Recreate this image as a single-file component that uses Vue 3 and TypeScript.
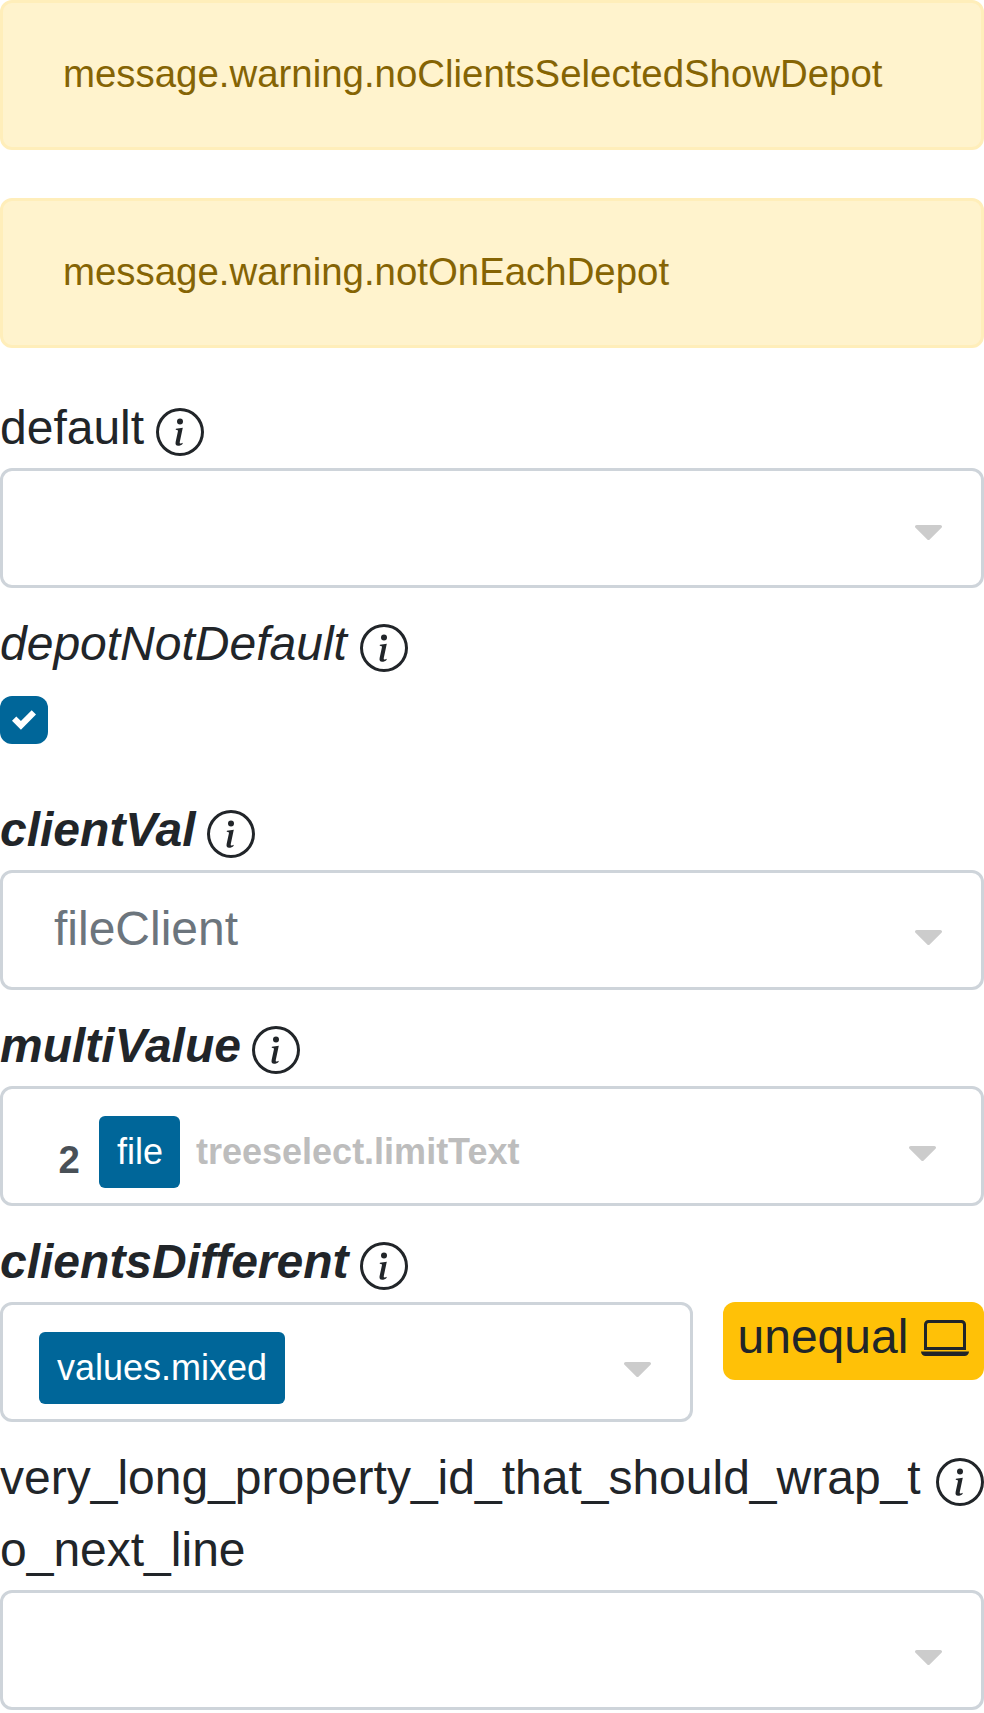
<script setup lang="ts">
interface Field {
  id: string
  kind: 'select' | 'checkbox'
  look?: string
  placeholder?: string
  count?: number
  tag?: string
  limit?: string
  badge?: string
  arrow?: string
}

const alerts: string[] = [
  'message.warning.noClientsSelectedShowDepot',
  'message.warning.notOnEachDepot',
]

const fields: Field[] = [
  { id: 'default', kind: 'select', arrow: 'raised' },
  { id: 'depotNotDefault', kind: 'checkbox', look: 'italic' },
  { id: 'clientVal', kind: 'select', look: 'strong', placeholder: 'fileClient' },
  { id: 'multiValue', kind: 'select', look: 'strong', count: 2, tag: 'file', limit: 'treeselect.limitText', arrow: 'inset' },
  { id: 'clientsDifferent', kind: 'select', look: 'strong', tag: 'values.mixed', badge: 'unequal' },
  { id: 'very_long_property_id_that_should_wrap_to_next_line', kind: 'select' },
]
</script>

<template>
  <main class="page">
    <div v-for="text in alerts" :key="text" class="alert">{{ text }}</div>
    <section v-for="field in fields" :key="field.id" class="field">
      <div class="label">
        <span class="name" :class="field.look">{{ field.id }}</span>
        <svg class="info" viewBox="0 0 16 16" fill="currentColor">
          <path fill-rule="evenodd" d="M8 15A7 7 0 1 0 8 1a7 7 0 0 0 0 14zm0 1A8 8 0 1 0 8 0a8 8 0 0 0 0 16z" />
          <path d="M8.93 6.588l-2.29.287-.082.38.45.083c.294.07.352.176.288.469l-.738 3.468c-.194.897.105 1.319.808 1.319.545 0 1.178-.252 1.465-.598l.088-.416c-.2.176-.492.246-.686.246-.275 0-.375-.193-.304-.533L8.93 6.588z" />
          <circle cx="8" cy="4.5" r="1" />
        </svg>
      </div>
      <div v-if="field.kind === 'checkbox'" class="check-row">
        <span class="check">
          <svg viewBox="0 0 8 8" fill="#fff"><path d="M6.564.75l-3.59 3.612-1.538-1.55L0 4.26l2.974 2.99L8 2.193z" /></svg>
        </span>
      </div>
      <div v-else class="control-row">
        <div class="select">
          <span v-if="field.placeholder" class="placeholder">{{ field.placeholder }}</span>
          <span v-if="field.count" class="count">{{ field.count }}</span>
          <span v-if="field.tag" class="tag">{{ field.tag }}</span>
          <span v-if="field.limit" class="limit">{{ field.limit }}</span>
          <svg class="arrow" :class="field.arrow" viewBox="0 0 292.362 292.362" fill="#ccc">
            <path d="M286.935 69.377c-3.614-3.617-7.898-5.424-12.848-5.424H18.274c-4.952 0-9.233 1.807-12.85 5.424C1.807 72.998 0 77.279 0 82.228c0 4.948 1.807 9.229 5.424 12.847l127.907 127.907c3.621 3.617 7.902 5.428 12.85 5.428s9.233-1.811 12.847-5.428L286.935 95.074c3.613-3.617 5.427-7.898 5.427-12.847 0-4.948-1.814-9.229-5.427-12.85z" />
          </svg>
        </div>
        <div v-if="field.badge" class="badge">
          <span>{{ field.badge }}</span>
          <svg viewBox="0 0 16 16" fill="currentColor">
            <path fill-rule="evenodd" d="M13.5 3h-11a.5.5 0 0 0-.5.5V11h12V3.5a.5.5 0 0 0-.5-.5zm-11-1A1.5 1.5 0 0 0 1 3.5V12h14V3.5A1.5 1.5 0 0 0 13.5 2h-11z" />
            <path d="M0 12.5h16a1.5 1.5 0 0 1-1.5 1.5h-13A1.5 1.5 0 0 1 0 12.5z" />
          </svg>
        </div>
      </div>
    </section>
  </main>
</template>

<style>
body {
  margin: 0;
  background: #fff;
}
</style>

<style scoped>
.page {
  box-sizing: border-box;
  width: 984px;
  height: 1713px;
  overflow: hidden;
  font-family: "Liberation Sans", Arial, sans-serif;
  font-size: 48px;
  line-height: 72px;
  color: #212529;
}
.page * {
  box-sizing: border-box;
}
.alert {
  height: 150px;
  margin-bottom: 48px;
  padding: 42px 60px 0;
  border: 3px solid #ffeeba;
  border-radius: 12px;
  background: #fff3cd;
  color: #856404;
  font-size: 38.4px;
  line-height: 58px;
}
.alert + .field {
  margin-top: -24px;
}
.label {
  display: flex;
  align-items: flex-start;
  padding: 20px 0 4px;
}
.name {
  min-width: 0;
  word-break: break-all;
}
.italic {
  font-style: italic;
}
.strong {
  font-style: italic;
  font-weight: 700;
}
.info {
  flex: none;
  width: 48px;
  height: 48px;
  margin: 16px 0 0 12px;
}
.italic + .info {
  margin-left: 13px;
}
.strong + .info {
  margin-left: 11px;
}
.check-row {
  height: 90px;
  padding-top: 12px;
}
.check {
  display: flex;
  align-items: center;
  justify-content: center;
  width: 48px;
  height: 48px;
  border-radius: 12px;
  background: #006699;
}
.check svg {
  width: 24px;
  height: 24px;
}
.control-row {
  display: flex;
  align-items: flex-start;
  gap: 30px;
}
.select {
  display: flex;
  align-items: flex-start;
  flex: 1;
  min-width: 0;
  height: 120px;
  padding: 0 39px 0 36px;
  border: 3px solid #ced4da;
  border-radius: 12px;
}
.placeholder {
  margin: 20px 0 0 15px;
  color: #6c757d;
}
.count {
  width: 60px;
  margin-top: 35px;
  padding-left: 19.4px;
  font-size: 38.4px;
  font-weight: 700;
  line-height: 72px;
  color: #495057;
}
.tag {
  height: 72px;
  margin-top: 27px;
  padding: 0 18px;
  border-radius: 6px;
  background: #006699;
  color: #fff;
  font-size: 36px;
  line-height: 72px;
}
.count + .tag {
  width: 81px;
}
.limit {
  margin: 27px 0 0 16px;
  font-size: 36px;
  font-weight: 700;
  color: #bdbdbd;
}
.arrow {
  flex: none;
  width: 27px;
  height: 27px;
  margin: 51px 0 0 auto;
}
.arrow.raised {
  margin-top: 48px;
}
.arrow.inset {
  margin-right: 6px;
}
.badge {
  display: flex;
  width: 261px;
  height: 78px;
  padding: 0 15px 0 14.5px;
  border-radius: 12px;
  background: #ffc107;
  line-height: 70px;
}
.badge svg {
  flex: none;
  width: 48px;
  height: 48px;
  margin: 12px 0 0 auto;
}
</style>
